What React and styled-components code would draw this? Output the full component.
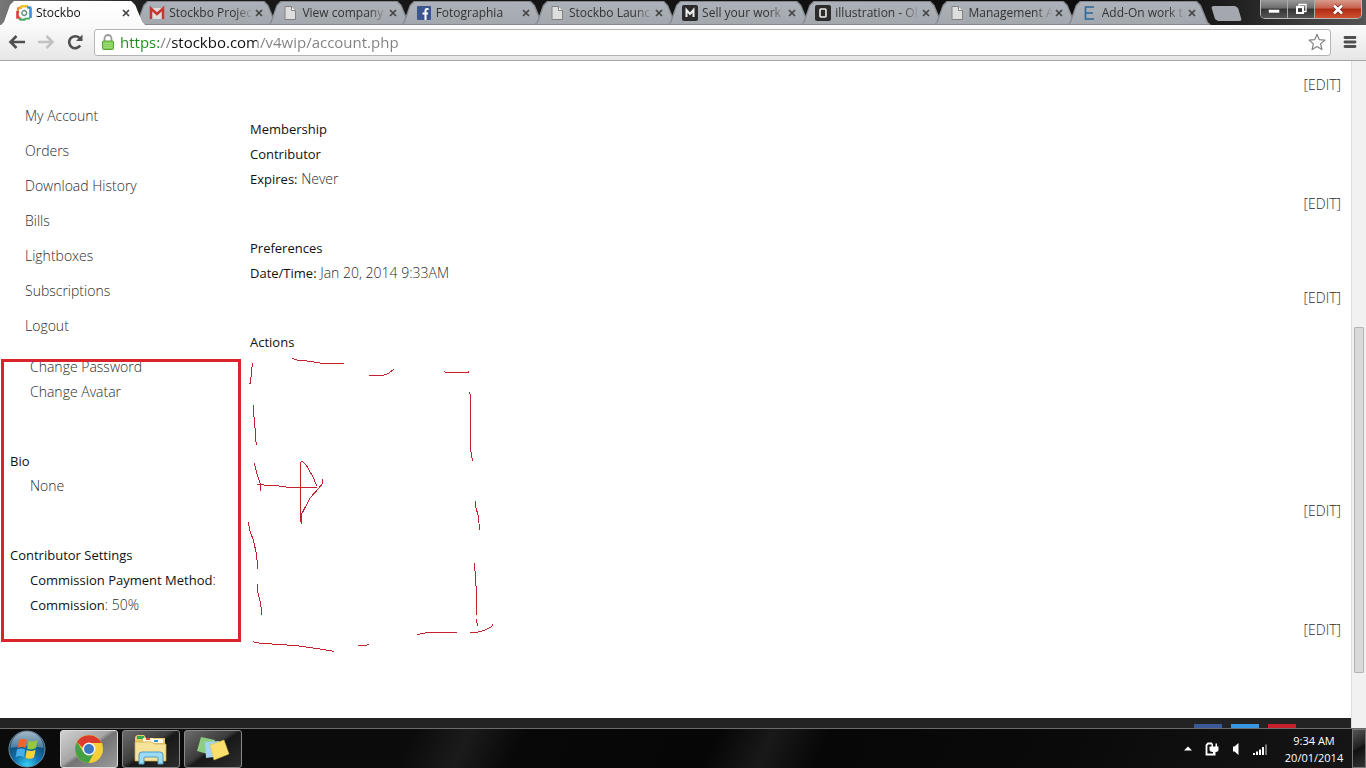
import React from 'react';
import styled, { createGlobalStyle, css } from 'styled-components';

const Global = createGlobalStyle`
  *, *::before, *::after { box-sizing: border-box; }
  body { margin: 0; background: #fff; font-family: "Open Sans", "Noto Sans", sans-serif; }
  button { font: inherit; padding: 0; border: 0; background: none; color: inherit; cursor: pointer; }
  svg { display: block; flex-shrink: 0; }
`;

const Desktop = styled.div`
  min-height: 100vh;
  display: flex;
  flex-direction: column;
`;

/* ---------- browser chrome ---------- */

const TabStrip = styled.div`
  display: flex;
  height: 25px;
  padding: 1px 4px 0 1px;
  background: linear-gradient(90deg, #777 0, #1a1a1a 150px, #0c0c0c 84%, #222 91%, #555 100%);
`;

const TabList = styled.div`
  flex: 1;
  min-width: 0;
  display: flex;
`;

const tabShape = 'polygon(0 100%, 3px 21px, 9px 4px, 13px 0, calc(100% - 14px) 0, calc(100% - 10px) 4px, calc(100% - 3px) 21px, 100% 100%)';

const TabBox = styled.div`
  position: relative;
  flex: 1 1 0;
  min-width: 0;
  display: flex;
  align-items: center;
  margin-right: -11px;
  padding: 0 13px 0 15px;
  z-index: ${p => (p.$active ? 2 : 1)};
  color: ${p => (p.$active ? '#111' : '#333')};
  &:last-child { margin-right: 0; }
  &::before, &::after {
    content: "";
    position: absolute;
    inset: 0;
    z-index: -1;
    clip-path: ${tabShape};
    background: ${p => (p.$active ? '#fff' : '#84888e')};
  }
  &::after {
    inset: 1px 1px ${p => (p.$active ? '0' : '1px')} 1px;
    background: ${p => (p.$active ? 'linear-gradient(#fff, #fafafa)' : 'linear-gradient(#adb1b9, #a3a7ae)')};
  }
`;

const TabButton = styled.button`
  flex: 1;
  min-width: 0;
  display: flex;
  align-items: center;
  gap: 4px;
  height: 24px;
`;

const TabTitle = styled.span`
  flex: 1;
  min-width: 0;
  white-space: nowrap;
  text-align: left;
  font-size: 12px;
  line-height: 16px;
  mask-image: linear-gradient(90deg, #000 calc(100% - 18px), transparent);
`;

const TabClose = styled.button`
  width: 12px;
  height: 16px;
  display: grid;
  place-items: center;
`;

const NewTab = styled.button`
  width: 31px;
  height: 15px;
  margin-top: 5px;
  background: #a4a8ae;
  border-radius: 3px;
  clip-path: polygon(0 0, 24px 0, 27px 2px, 100% 100%, 7px 100%, 4px 13px);
`;

const WindowButtons = styled.div`
  display: flex;
  height: 19px;
  margin: -1px 0 0 18px;
  border: 1px solid #b9b9b9;
  border-top: 0;
  border-radius: 0 0 5px 5px;
  overflow: hidden;
`;

const WindowButton = styled.button`
  width: ${p => (p.$close ? 46 : 27)}px;
  display: grid;
  place-items: center;
  border-right: ${p => (p.$close ? '0' : '1px solid #aaa')};
  background: ${p => (p.$close
    ? 'linear-gradient(#d99a8c 0, #c9604d 45%, #b02a14 50%, #cf5030)'
    : 'linear-gradient(#999 0, #6c6c6c 45%, #333 50%, #555)')};
`;

const Toolbar = styled.form`
  display: flex;
  align-items: center;
  height: 36px;
  padding: 0 9px 1px 7px;
  border-bottom: 1px solid #a5a5a5;
  background: linear-gradient(#fbfbfb, #e6e6e6);
`;

const NavButton = styled.button`
  width: 20px;
  height: 20px;
  margin-right: 9px;
  display: grid;
  place-items: center;
`;

const Omnibox = styled.div`
  flex: 1;
  display: flex;
  align-items: center;
  height: 27px;
  padding: 0 4px 0 6px;
  margin-right: 12px;
  border: 1px solid #b4b4b4;
  border-radius: 3px;
  background: #fff;
`;

const Address = styled.input`
  flex: 1;
  min-width: 0;
  height: 24px;
  margin-left: 5px;
  padding: 0;
  border: 0;
  outline: 0;
  font: 15px/24px "Open Sans", "Noto Sans", sans-serif;
  color: transparent;
  background: linear-gradient(90deg, #1c8a1c 39px, #808080 39px, #808080 52px, #111 52px, #111 137px, #808080 137px);
  background-clip: text;
`;

/* ---------- web page ---------- */

const Viewport = styled.div`
  flex: 1;
  display: flex;
`;

const Page = styled.div`
  position: relative;
  flex: 1;
  min-width: 0;
  display: flex;
  flex-direction: column;
  background: #fff;
  color: #2c2c2c;
  font-size: 14px;
  font-weight: 300;
`;

const Columns = styled.div`
  display: flex;
  padding-top: 12px;
`;

const Sidebar = styled.nav`
  width: 250px;
  padding: 25px 0 0 25px;
  line-height: 35px;
  ul { list-style: none; margin: 0; padding: 0; }
`;

const Main = styled.main`
  flex: 1;
  min-width: 0;
`;

const PlainLink = styled.a`
  color: inherit;
  text-decoration: none;
`;

const Line = styled.p`
  height: 25px;
  margin: 0;
  padding-left: ${p => (p.$indent ? 20 : 0)}px;
  line-height: 23px;
  white-space: nowrap;
  b { font-size: 13px; font-weight: 400; color: #111; }
`;

const EditLine = styled(Line)`
  margin: 0 10px 19px 0;
  text-align: right;
`;

const Heading = styled.h2`
  margin: 0;
  font-size: 13px;
  line-height: 25px;
  font-weight: 400;
  color: #111;
`;

const Lower = styled.section`
  flex: 1;
  padding-left: 10px;
`;

const Footer = styled.footer`
  display: flex;
  justify-content: flex-end;
  align-items: flex-end;
  gap: 9px;
  height: 10px;
  padding-right: 55px;
  background: #232323;
`;

const SocialBar = styled.a`
  width: 28px;
  height: 4px;
  background: ${p => p.$color};
`;

const ScrollTrack = styled.div`
  width: 15px;
  display: flex;
  flex-direction: column;
  padding: 266px 2px 0 2px;
  border-left: 1px solid #dcdcdc;
  background: #f1f1f1;
`;

const ScrollThumb = styled.div`
  height: 346px;
  border: 1px solid #b4b4b4;
  border-radius: 1px;
  background: #d9d9d9;
`;

const MarkBox = styled.div`
  position: absolute;
  left: 1px;
  top: 298px;
  width: 240px;
  height: 283px;
  border: 3px solid #db232c;
  pointer-events: none;
`;

const Sketch = styled.svg`
  position: absolute;
  left: 240px;
  top: 279px;
  pointer-events: none;
`;

/* ---------- taskbar ---------- */

const Taskbar = styled.footer`
  display: flex;
  align-items: center;
  height: 40px;
  border-top: 1px solid #6b6b6b;
  background: linear-gradient(115deg, #0b0b0b 0 30%, #1b1b1b 34%, #080808 38%, #060606 52%, #191919 56%, #070707 60%, #0a0a0a 78%, #161616 100%);
  color: #fff;
`;

const StartButton = styled.button`
  width: 38px;
  height: 38px;
  margin: 0 14px 0 8px;
`;

const TaskButton = styled.button`
  width: 58px;
  height: 38px;
  margin-right: 4px;
  display: grid;
  place-items: center;
  border: 1px solid ${p => (p.$active ? '#dcdcdc' : '#8a8a8a')};
  border-radius: 3px;
  ${p => (p.$active
    ? css`background: linear-gradient(145deg, #d0d0d0 0, #a6a6a6 45%, #747474 52%, #9a9a9a 100%);`
    : css`background: linear-gradient(145deg, #6c6c6c 0, #3c3c3c 45%, #181818 52%, #2c2c2c 100%);`)}
`;

const Tray = styled.div`
  display: flex;
  align-items: center;
  gap: 8px;
  margin-left: auto;
`;

const TrayButton = styled.button`
  width: 16px;
  height: 16px;
  display: grid;
  place-items: center;
`;

const Clock = styled.time`
  width: 76px;
  text-align: center;
  font-size: 11px;
  line-height: 17px;
`;

const ShowDesktop = styled.button`
  width: 14px;
  height: 39px;
  border: 1px solid #777;
  background: linear-gradient(150deg, #555, #222 45%, #111 50%, #333);
`;

/* ---------- icons ---------- */

const PageIcon = () => (
  <svg width="16" height="16" viewBox="0 0 16 16">
    <path d="M3 1.500h6.500l4 4V14.500H3z" fill="#dedede" stroke="#808080" />
    <path d="M9.500 1.500v4h4" fill="#f5f5f5" stroke="#808080" />
  </svg>
);

const icons = {
  stockbo: (
    <svg width="16" height="16" viewBox="0 0 16 16">
      <path d="M2 8V4q0-1 1-1h3" fill="none" stroke="#ef8b2c" strokeWidth="2.400" />
      <path d="M4 2.500L6 1.200h6" fill="none" stroke="#e9c324" strokeWidth="2.400" />
      <path d="M1.500 6v6.500H5" fill="none" stroke="#de3e3a" strokeWidth="2.600" />
      <path d="M11 2.500h2.500q1 0 1 1V13" fill="none" stroke="#3a8fd0" strokeWidth="2.600" />
      <path d="M14 13.500H10l-1.500 1.200H4.500L3 13.500" fill="none" stroke="#49ae63" strokeWidth="2.200" />
      <rect x="3.500" y="3.800" width="9.500" height="8.500" fill="#fff" />
      <path d="M8.200 4.200l3.600 3.800-3.600 3.800L4.600 8z" fill="#8fc1a5" />
      <circle cx="8.200" cy="8" r="2.300" fill="#fff" stroke="#5d8e78" strokeWidth="1.200" />
    </svg>
  ),
  gmail: (
    <svg width="16" height="16" viewBox="0 0 16 16">
      <path d="M1 3h14v11H1z" fill="#ddd" />
      <path d="M2 14V3.500l6 5.500 6-5.500V14" fill="none" stroke="#c8372d" strokeWidth="2.500" />
    </svg>
  ),
  page: <PageIcon />,
  facebook: (
    <svg width="16" height="16" viewBox="0 0 16 16">
      <rect x="1" y="1" width="14" height="14" rx="1" fill="#3b5590" />
      <path d="M12.500 4H11Q9.500 4 9.500 6v9M6.500 8.500h5.500" fill="none" stroke="#fff" strokeWidth="2" />
    </svg>
  ),
  m: (
    <svg width="16" height="16" viewBox="0 0 16 16">
      <rect width="16" height="16" rx="2" fill="#2b2b2b" />
      <path d="M4.500 12V5L8 9l3.500-4v7" fill="none" stroke="#eee" strokeWidth="2" />
    </svg>
  ),
  o: (
    <svg width="16" height="16" viewBox="0 0 16 16">
      <rect width="16" height="16" rx="2" fill="#2b2b2b" />
      <rect x="5" y="4" width="6" height="8" rx="1" fill="none" stroke="#eee" strokeWidth="1.600" />
    </svg>
  ),
  e: (
    <svg width="16" height="16" viewBox="0 0 16 16">
      <path d="M12 2H3.500v12H12M3.500 8H11" fill="none" stroke="#2f6797" strokeWidth="1.600" />
    </svg>
  ),
};

const CloseIcon = () => (
  <svg width="8" height="8" viewBox="0 0 8 8">
    <path d="M1 1l6 6M7 1L1 7" stroke="#444" strokeWidth="1.700" />
  </svg>
);

const StartOrb = () => (
  <svg width="38" height="38" viewBox="0 0 38 38">
    <defs>
      <radialGradient id="orb" cx=".5" cy=".95" r=".9">
        <stop offset="0" stopColor="#35d2f7" />
        <stop offset=".4" stopColor="#1273ac" />
        <stop offset="1" stopColor="#0d3257" />
      </radialGradient>
      <linearGradient id="gloss" x2="0" y2="1">
        <stop offset="0" stopColor="#d7e4ec" />
        <stop offset="1" stopColor="#5d89a6" />
      </linearGradient>
    </defs>
    <circle cx="19" cy="19" r="18" fill="url(#orb)" stroke="#6f8ea3" />
    <path d="M2.500 18a16.500 16.500 0 0 1 33 0Q19 14 2.500 18z" fill="url(#gloss)" opacity=".75" />
    <path d="M11 10q4-2.500 8 0l-1.500 8q-4-2-8 0z" fill="#f0642b" />
    <path d="M20.500 10.500q4 2 9-.5L28 18q-4.500 2.500-9 .5z" fill="#94c83d" />
    <path d="M9 19.500q4-2 8.200 0L16 27q-4-2-8.300 0z" fill="#48aee8" />
    <path d="M18.800 20q4.500 2 8.800-.3L26 27.500q-4.300 2.300-8.500.3z" fill="#fdd03a" />
  </svg>
);

const ChromeIcon = () => (
  <svg width="30" height="30" viewBox="0 0 30 30">
    <circle cx="15" cy="15" r="14" fill="#f5cf35" />
    <path d="M2.900 8A14 14 0 0 0 14.500 29L20.500 18 15 15 9.500 18z" fill="#45a144" />
    <path d="M2.900 8A14 14 0 0 1 27.500 9H15q-5 0-6 5z" fill="#da3b2d" />
    <circle cx="15" cy="15" r="6.500" fill="#f4f4f4" />
    <circle cx="15" cy="15" r="5" fill="#3a78c4" />
  </svg>
);

const ExplorerIcon = () => (
  <svg width="36" height="32" viewBox="0 0 36 32">
    <path d="M2 4l2-2h7l2 3h19v23H2z" fill="#e9c867" />
    <path d="M4 3h7v3H4z" fill="#35a853" />
    <path d="M10 5h10v4H10z" fill="#fff5d0" />
    <path d="M13 5h4v2h-4z" fill="#d24b3a" />
    <path d="M18 6h12v4H18z" fill="#fffbe6" />
    <path d="M21 7h4v2h-4z" fill="#3a8fd0" />
    <path d="M2 9h17l2 2h12v17H2z" fill="#f7e29a" stroke="#cfa94a" strokeWidth=".7" />
    <path d="M6 31V22q0-3 3-3h18q3 0 3 3v9h-5v-6q0-1-1-1H12q-1 0-1 1v6z" fill="#9bdcf3" stroke="#4f9cc5" />
  </svg>
);

const NotesIcon = () => (
  <svg width="36" height="32" viewBox="0 0 36 32">
    <path d="M6 4l14 3-4 15-14-4z" fill="#8fce82" />
    <path d="M10 9l14-1 2 15-15 2z" fill="#a4d3f3" />
    <path d="M15 12l14-5 5 14-15 6z" fill="#f9df6d" stroke="#e2bd42" strokeWidth=".5" />
  </svg>
);

/* ---------- data ---------- */

const tabs = [
  ['stockbo', 'Stockbo'],
  ['gmail', 'Stockbo Projec'],
  ['page', 'View company'],
  ['facebook', 'Fotographia'],
  ['page', 'Stockbo Launc'],
  ['m', 'Sell your work'],
  ['o', 'illustration - Ol'],
  ['page', 'Management A'],
  ['e', 'Add-On work t'],
];

const menu = ['My Account', 'Orders', 'Download History', 'Bills', 'Lightboxes', 'Subscriptions', 'Logout'];

const strokes = [
  'M38 69L34 95 32 130H28', 'M40 195V218L44 245 47 300 50 314', 'M43 370L52 405 60 430 62 452',
  'M51 434L110 437 145 442H230', 'M180 530V368L187 364 200 378 220 412 230 438',
  'M248 418V430L230 452 210 474 186 520 184 553 181 530',
  'M25 547L29 570 40 600 50 645 53 686', 'M52 732V752L62 790 65 824',
  'M156 55L175 61 212 64 245 70H312', 'M387 106H430L446 100 462 87', 'M613 94L617 97H686V94',
  'M688 156L691 165V325L698 364', 'M706 484V495L715 530 719 570', 'M703 670L706 705 710 770V824',
  'M709 838L713 857', 'M690 878H708L735 870 756 859 759 852', 'M531 884L560 878H650',
  'M39 905L45 908 95 912 170 917 240 927 275 933H282', 'M355 916H380L387 912',
];

const Edit = () => <EditLine><PlainLink href="#edit">[EDIT]</PlainLink></EditLine>;

export default function App() {
  return (
    <Desktop>
      <Global />
      <header>
        <TabStrip>
          <TabList>
            {tabs.map(([icon, title], i) => (
              <TabBox key={title} $active={i === 0}>
                <TabButton type="button">{icons[icon]}<TabTitle>{title}</TabTitle></TabButton>
                <TabClose type="button" aria-label={`Close ${title}`}><CloseIcon /></TabClose>
              </TabBox>
            ))}
          </TabList>
          <NewTab type="button" aria-label="New tab" />
          <WindowButtons>
            <WindowButton type="button" aria-label="Minimize">
              <svg width="12" height="10" viewBox="0 0 12 10"><rect x=".5" y="5.500" width="11" height="3.500" fill="#fff" stroke="#444" strokeWidth=".6" /></svg>
            </WindowButton>
            <WindowButton type="button" aria-label="Restore">
              <svg width="12" height="12" viewBox="0 0 12 12">
                <path d="M4 3V1.500h7v7H9" fill="none" stroke="#fff" strokeWidth="1.300" />
                <rect x="2" y="4" width="6" height="6" fill="none" stroke="#fff" strokeWidth="2" />
              </svg>
            </WindowButton>
            <WindowButton type="button" aria-label="Close" $close>
              <svg width="12" height="11" viewBox="0 0 12 11">
                <path d="M2 1.500l8 8M10 1.500l-8 8" stroke="#6b2a22" strokeWidth="4" />
                <path d="M2 1.500l8 8M10 1.500l-8 8" stroke="#fff" strokeWidth="2.600" />
              </svg>
            </WindowButton>
          </WindowButtons>
        </TabStrip>
        <Toolbar>
          <NavButton type="button" aria-label="Back">
            <svg width="18" height="16" viewBox="0 0 18 16"><path d="M8.500 2L2.500 8l6 6M3 8h14" fill="none" stroke="#505050" strokeWidth="2.600" /></svg>
          </NavButton>
          <NavButton type="button" aria-label="Forward">
            <svg width="18" height="16" viewBox="0 0 18 16"><path d="M9.500 2l6 6-6 6M15 8H1" fill="none" stroke="#c2c2c2" strokeWidth="2.600" /></svg>
          </NavButton>
          <NavButton type="button" aria-label="Reload">
            <svg width="18" height="18" viewBox="0 0 18 18">
              <path d="M14.200 12.500A6 6 0 1 1 13.500 5" fill="none" stroke="#505050" strokeWidth="2.600" />
              <path d="M16.500 1.500v6.500H10z" fill="#505050" />
            </svg>
          </NavButton>
          <Omnibox>
            <svg width="14" height="18" viewBox="0 0 14 18">
              <path d="M3.500 9V5.500a3.500 3.500 0 0 1 7 0V9" fill="none" stroke="#9a9a9a" strokeWidth="1.800" />
              <rect x="1.500" y="8" width="11" height="8.500" rx="1" fill="#82cf58" stroke="#5aa53a" />
              <path d="M2.500 10.500h9M2.500 12.500h9M2.500 14.500h9" stroke="#a6e280" strokeWidth=".8" />
            </svg>
            <Address aria-label="Address" defaultValue="https://stockbo.com/v4wip/account.php" />
            <svg width="18" height="18" viewBox="0 0 18 18">
              <path d="M9 1.200l2.200 5.400 5.700.5-4.300 3.800 1.300 5.700L9 13.600l-4.900 3 1.300-5.700L1.100 7.100l5.700-.5z" fill="#fff" stroke="#808080" strokeWidth="1.200" strokeLinejoin="round" />
            </svg>
          </Omnibox>
          <button type="button" aria-label="Menu">
            <svg width="14" height="14" viewBox="0 0 14 14"><path d="M2 2.500h10M2 7h10M2 11.500h10" stroke="#505050" strokeWidth="2.800" strokeLinecap="round" /></svg>
          </button>
        </Toolbar>
      </header>

      <Viewport>
        <Page>
          <Columns>
            <Sidebar>
              <ul>{menu.map(m => <li key={m}><PlainLink href="#menu">{m}</PlainLink></li>)}</ul>
            </Sidebar>
            <Main>
              <Edit />
              <Heading>Membership</Heading>
              <Line><b>Contributor</b></Line>
              <Line><b>Expires:</b> Never</Line>
              <Edit />
              <Heading>Preferences</Heading>
              <Line><b>Date/Time:</b> Jan 20, 2014 9:33AM</Line>
              <Edit />
              <Heading>Actions</Heading>
            </Main>
          </Columns>
          <Lower>
            <Line $indent><PlainLink href="#password">Change Password</PlainLink></Line>
            <Line $indent><PlainLink href="#avatar">Change Avatar</PlainLink></Line>
            <EditLine />
            <Heading>Bio</Heading>
            <Line $indent>None</Line>
            <Edit />
            <Heading>Contributor Settings</Heading>
            <Line $indent><b>Commission Payment Method</b>:</Line>
            <Line $indent><b>Commission</b>: 50%</Line>
            <Edit />
          </Lower>
          <Footer>
            <SocialBar href="#facebook" aria-label="Facebook" $color="#3b5998" />
            <SocialBar href="#twitter" aria-label="Twitter" $color="#3897e3" />
            <SocialBar href="#pinterest" aria-label="Pinterest" $color="#c8202a" />
          </Footer>
          <MarkBox />
          <Sketch width="270" height="320" viewBox="0 0 810 960" fill="none" stroke="#c4222c" strokeWidth="3" shapeRendering="crispEdges">
            {strokes.map(d => <path key={d} d={d} />)}
          </Sketch>
        </Page>
        <ScrollTrack><ScrollThumb /></ScrollTrack>
      </Viewport>

      <Taskbar>
        <StartButton type="button" aria-label="Start"><StartOrb /></StartButton>
        <TaskButton type="button" aria-label="Chrome" $active><ChromeIcon /></TaskButton>
        <TaskButton type="button" aria-label="Explorer"><ExplorerIcon /></TaskButton>
        <TaskButton type="button" aria-label="Sticky Notes"><NotesIcon /></TaskButton>
        <Tray>
          <TrayButton type="button" aria-label="Show hidden icons">
            <svg width="8" height="5" viewBox="0 0 8 5"><path d="M0 4.500L4 .5l4 4z" fill="#fff" /></svg>
          </TrayButton>
          <TrayButton type="button" aria-label="Power">
            <svg width="16" height="16" viewBox="0 0 16 16">
              <path d="M8 2.500H4L2.500 4v9.500H9" fill="none" stroke="#fff" strokeWidth="1.800" />
              <path d="M5.500 5.500h9v3q0 2.500-3 2.500v3.500H9V11q-3.500 0-3.500-2.500zM7.500 2.500H9v3H7.500zM11.500 2.500H13v3h-1.500z" fill="#fff" />
            </svg>
          </TrayButton>
          <TrayButton type="button" aria-label="Volume">
            <svg width="16" height="16" viewBox="0 0 16 16"><path d="M5 5.500h1.500L10.500 2v12l-4-3.500H5z" fill="#fff" /></svg>
          </TrayButton>
          <TrayButton type="button" aria-label="Network">
            <svg width="16" height="16" viewBox="0 0 16 16">
              <path d="M2 12v2M5 10.500V14M8 8.500V14M11 6v8" stroke="#fff" strokeWidth="2" />
              <path d="M14 3.500V14" stroke="#777" strokeWidth="2" />
            </svg>
          </TrayButton>
          <Clock>9:34 AM<br />20/01/2014</Clock>
        </Tray>
        <ShowDesktop type="button" aria-label="Show desktop" />
      </Taskbar>
    </Desktop>
  );
}
